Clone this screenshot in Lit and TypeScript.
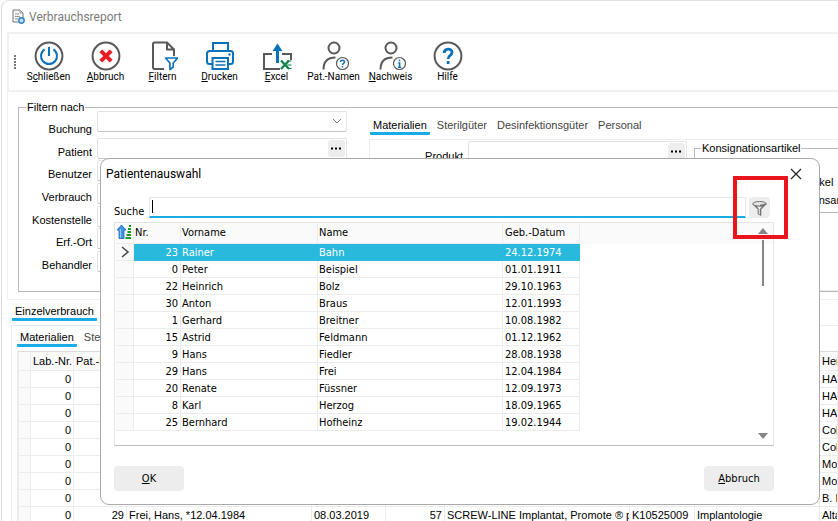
import { LitElement, html, css, svg } from "lit";
import { customElement } from "lit/decorators.js";
import { classMap } from "lit/directives/class-map.js";

const GREY = "#58595b";
const BLUE = "#0a72b9";

const icons = {
  power: svg`<circle cx="15" cy="15" r="13.4" fill="none" stroke=${GREY} stroke-width="2"/>
    <path d="M10.6 8.3a8 8 0 1 0 8.8 0M15 6v9" fill="none" stroke=${BLUE} stroke-width="2"/>`,
  cancel: svg`<circle cx="15" cy="15" r="13.4" fill="none" stroke=${GREY} stroke-width="2"/>
    <path d="M9.8 9.8l10.4 10.4M20.2 9.8L9.8 20.2" fill="none" stroke="#e81c24" stroke-width="4"/>`,
  filter: svg`<path d="M16 28H6.500A1.500 1.500 0 0 1 5 26.500V3A1.500 1.500 0 0 1 6.500 1.500H19l7 7V15M19 1.500v7h7" fill="none" stroke=${GREY} stroke-width="2"/>
    <path d="M17.500 17h12l-4.300 5v4l-3.300 2.500V22z" fill="#fff" stroke=${BLUE} stroke-width="1.600" stroke-linejoin="round"/>`,
  print: svg`<path d="M8 10V2h15v8M7 23H4.500A2.500 2.500 0 0 1 2 20.500v-8A2.500 2.500 0 0 1 4.500 10h21a2.500 2.500 0 0 1 2.500 2.500v8a2.500 2.500 0 0 1-2.500 2.500H23" fill="none" stroke=${BLUE} stroke-width="2"/>
    <path d="M7.500 17h15.500v11H7.500z" fill="#fff" stroke=${BLUE} stroke-width="2"/>
    <path d="M10.500 20.500h10M10.500 24h10" stroke=${BLUE} stroke-width="1.300"/><circle cx="24.500" cy="13.500" r="1.200" fill=${BLUE}/>`,
  excel: svg`<path d="M10 13H2v15h16M20 13h9v6" fill="none" stroke=${GREY} stroke-width="2"/>
    <path d="M15.500 22V8" stroke=${BLUE} stroke-width="3"/><path d="M10.500 10l5-7.500 5 7.500z" fill=${BLUE}/>
    <path d="M19 19.500l8 8.500M27 19.500L19 28" stroke="#12804a" stroke-width="2.300"/><path d="M25 20h4.500M25 24h4.500M26 27.500h3.500" stroke="#12804a" stroke-width="1.200"/>`,
  person: svg`<circle cx="15" cy="7" r="5.500" fill="none" stroke=${GREY} stroke-width="2"/>
    <path d="M4.500 28.500c0-7.500 4-12 12-12" fill="none" stroke=${GREY} stroke-width="2"/>
    <circle cx="23.500" cy="22.500" r="6" fill="#fff" stroke=${GREY} stroke-width="1.200"/>`,
  question: svg`<path d="M21.500 21c0-2.500 4-2.500 4 0 0 1.500-2 1.300-2 3M23.500 25.100v1.500" fill="none" stroke=${BLUE} stroke-width="1.500"/>`,
  info: svg`<path d="M23.500 18.500v1.800M22.300 22h1.300v4.200M22 26.200h3.200" fill="none" stroke=${BLUE} stroke-width="1.500"/>`,
  help: svg`<circle cx="15" cy="15" r="13.400" fill="none" stroke=${GREY} stroke-width="2"/>
    <path d="M11.200 12c0-5 7.800-5 7.800-.5 0 3-3.900 2.800-3.900 6.500M15.100 20v3" fill="none" stroke=${BLUE} stroke-width="2.800"/>`,
};

const tools = [
  { art: icons.power, text: html`S<u>c</u>hließen` },
  { art: icons.cancel, text: html`<u>A</u>bbruch` },
  { art: icons.filter, text: html`<u>F</u>iltern` },
  { art: icons.print, text: html`<u>D</u>rucken` },
  { art: icons.excel, text: html`<u>E</u>xcel` },
  { art: [icons.person, icons.question], text: html`Pat.-Namen` },
  { art: [icons.person, icons.info], text: html`<u>N</u>achweis` },
  { art: icons.help, text: html`Hilfe` },
];

const patients: [number, string, string, string][] = [
  [23, "Rainer", "Bahn", "24.12.1974"],
  [0, "Peter", "Beispiel", "01.01.1911"],
  [22, "Heinrich", "Bolz", "29.10.1963"],
  [30, "Anton", "Braus", "12.01.1993"],
  [1, "Gerhard", "Breitner", "10.08.1982"],
  [15, "Astrid", "Feldmann", "01.12.1962"],
  [9, "Hans", "Fiedler", "28.08.1938"],
  [29, "Hans", "Frei", "12.04.1984"],
  [20, "Renate", "Füssner", "12.09.1973"],
  [8, "Karl", "Herzog", "18.09.1965"],
  [25, "Bernhard", "Hofheinz", "19.02.1944"],
];

const filterNames = ["Buchung", "Patient", "Benutzer", "Verbrauch", "Kostenstelle", "Erf.-Ort", "Behandler"];
const makers = ["HAGER", "HAGER", "HAGER", "Coltene", "Coltene", "Morita", "Morita", "B. Braun"];

@customElement("patient-dialog")
export class PatientDialog extends LitElement {
  static styles = css`
    :host {
      display: block;
      box-sizing: border-box;
      padding: 0 45px 13px 13px;
      background: #fff;
      border: 1px solid #a9a9a9;
      border-radius: 9px;
      font: 11px/16px "DejaVu Sans Condensed", "DejaVu Sans", sans-serif;
      color: #000;
    }
    .head { display: flex; justify-content: space-between; align-items: center; height: 30px; margin: 0 -28px 0 -8px; }
    h2 { margin: 0; font: 12px/16px Roboto, sans-serif; }
    button { border: 0; padding: 0; font: inherit; color: inherit; background: #ededed; border-radius: 4px; }
    .close { background: none; width: 12px; height: 12px; display: flex; }
    .search { display: flex; align-items: flex-end; margin: 8px 4px 4px 0; height: 21px; }
    .search label { width: 35px; line-height: 12px; }
    .box { position: relative; flex: 1; display: flex; }
    .box input {
      flex: 1; min-width: 0; height: 21px; box-sizing: border-box; padding: 0 4px; outline: none;
      border: 1px solid #e6e6e6; border-bottom: 2px solid #1aace4; border-radius: 1px; font: inherit;
    }
    .caret { position: absolute; left: 3px; top: 3px; width: 1px; height: 13px; background: #000; }
    .funnel { width: 21px; height: 21px; margin-left: 3px; display: flex; align-items: center; justify-content: center; }
    .grid { display: flex; justify-content: space-between; border: 1px solid #e3e3e3; border-bottom: 1px solid #bdbdbd; height: 222px; padding-left: 1px; }
    table { border-collapse: separate; border-spacing: 0; table-layout: fixed; width: 464px; align-self: flex-start; }
    th { font-weight: 400; text-align: left; background: #fafafa; height: 21px; }
    th, td { padding: 0 2px 0 1px; border-right: 1px solid #ececec; border-bottom: 1px solid #ececec; box-sizing: border-box; white-space: nowrap; overflow: hidden; }
    td { height: 17px; line-height: 14px; padding-top: 2px; }
    .date { padding-left: 2px; }
    .mark { background: #fafafa; padding: 0; }
    .mark svg { display: block; }
    .num { text-align: right; }
    .selected td:not(.mark) { background: #29b9dd; color: #fff; border-color: #29b9dd; }
    .headfill { flex: 1; height: 21px; background: #fafafa; }
    .bar { display: flex; flex-direction: column; align-items: center; width: 21px; padding: 5px 0 6px; box-sizing: border-box; background: linear-gradient(#fafafa 21px, #fff 21px); }
    .thumb { width: 2px; height: 46px; margin-top: 6px; background: #858585; }
    .up, .down { border: 5px solid transparent; }
    .up { border-top: 0; border-bottom: 6px solid #858585; }
    .down { border-bottom: 0; border-top: 6px solid #858585; margin-top: auto; }
    .foot { display: flex; justify-content: space-between; margin-top: 20px; }
    .foot button { width: 70px; height: 25px; }
    .c0 { width: 18px; } .c1 { width: 47px; } .c2 { width: 137px; } .c3 { width: 185px; } .c4 { width: 77px; }
  `;

  render() {
    return html`
      <div class="head">
        <h2>Patientenauswahl</h2>
        <button class="close" aria-label="Schließen">
          <svg width="12" height="12"><path d="M1 1l10 10M11 1L1 11" stroke="#222" stroke-width="1.200" /></svg>
        </button>
      </div>
      <div class="search">
        <label for="q">Suche</label>
        <div class="box"><input id="q" type="text" /><span class="caret"></span></div>
        <button class="funnel" aria-label="Filter">
          <svg width="15" height="16" viewBox="0 0 15 16">
            <path d="M.8 4.200L6 9.500v4.500l3 1.500v-6l5.200-5.500z" fill="#7d7d7d" stroke="#6a6a6a" stroke-width=".6" />
            <path d="M6.800 9v4.800l1 .6V9L10 6.300H5z" fill="#f0f0f0" />
            <ellipse cx="7.500" cy="3.800" rx="6.700" ry="2.300" fill="#e4e4e4" stroke="#666" stroke-width=".9" />
            <path d="M8 5.200c3 0 5-.6 5.200-1.700" fill="none" stroke="#444" />
          </svg>
        </button>
      </div>
      <div class="grid">
        <table>
          <colgroup><col class="c0" /><col class="c1" /><col class="c2" /><col class="c3" /><col class="c4" /></colgroup>
          <thead>
            <tr>
              <th class="mark" aria-label="Sortierung">
                <svg width="17" height="18" viewBox="0 0 17 18">
                  <path d="M5.500 1L10 6H8v8.500H3V6H1z" fill="#3d94e6" stroke="#1c62b4" stroke-width=".8" />
                  <path d="M4.500 5v8.500" stroke="#8cc8fa" stroke-width="1.200" />
                  <path d="M13 2h2M12 5h3M11.500 8h3.500M10.500 11h4.500M9.500 14h5.500" stroke="#189a25" stroke-width="2" />
                </svg>
              </th>
              <th>Nr.</th><th>Vorname</th><th>Name</th><th class="date">Geb.-Datum</th>
            </tr>
          </thead>
          <tbody>
            ${patients.map(([nr, first, last, born], i) => html`
              <tr class=${classMap({ selected: i === 0 })}>
                <td class="mark">${i === 0 ? html`<svg width="17" height="16"><path d="M6 3l6 5-6 5" fill="none" stroke="#444" stroke-width="1.500" /></svg>` : ""}</td>
                <td class="num">${nr}</td><td>${first}</td><td>${last}</td><td class="date">${born}</td>
              </tr>`)}
          </tbody>
        </table>
        <div class="headfill"></div>
        <div class="bar"><span class="up"></span><span class="thumb"></span><span class="down"></span></div>
      </div>
      <div class="foot">
        <button><span><u>O</u>K</span></button>
        <button><span><u>A</u>bbruch</span></button>
      </div>
    `;
  }
}

@customElement("app-root")
export class AppRoot extends LitElement {
  static styles = css`
    :host { display: block; position: relative; height: 100vh; overflow: hidden; background: #fff; color: #000; font: 11px/14px "Liberation Sans", Arial, sans-serif; }
    .window { margin-left: 1px; padding-left: 5px; border-left: 1px solid #dcdcdc; border-top: 1px solid #e4e4e4; border-top-left-radius: 8px; }
    .title { display: flex; align-items: center; gap: 4px; height: 31px; padding-left: 5px; font: 12px/16px Roboto, sans-serif; color: #7b7b7b; }
    h1 { margin: 0; font: inherit; }
    .tools { display: flex; align-items: center; height: 56px; border: 2px solid #f0f0f0; border-right: 0; padding-left: 5px; }
    .grip { width: 2px; height: 14px; background: repeating-linear-gradient(#777 0 2px, #fff 2px 3px); margin-right: 4px; }
    .tool { display: flex; flex-direction: column; align-items: center; width: 57px; padding: 0; border: 0; background: none; font: 10px/12px Roboto, sans-serif; color: #000; white-space: nowrap; }
    .panel { border: 1px solid #f0f0f0; border-top: 0; border-right: 0; padding: 8px 0 7px 10px; }
    fieldset { margin: 0; min-width: 0; border: 1px solid #b9b9b9; border-right: 0; padding: 0; }
    legend { padding: 0 1px; margin-left: 7px; line-height: 14px; }
    .filters { display: flex; gap: 22px; height: 177px; }
    .fields { display: flex; gap: 5px; width: 328px; height: 161px; margin-top: -3px; flex: none; }
    .names { display: flex; flex-direction: column; justify-content: space-between; width: 73px; padding-top: 11px; text-align: right; white-space: nowrap; }
    .row { display: flex; align-items: flex-end; gap: 5px; height: 21px; }
    .row label { text-align: right; line-height: 12px; white-space: nowrap; }
    .values { flex: 1; display: flex; flex-direction: column; gap: 6px; }
    .rest { display: flex; flex-direction: column; justify-content: space-between; flex: 1; margin-top: -5px; }
    .ctl { position: relative; flex: 1; display: flex; }
    .rest .ctl, .values > .ctl { flex: none; }
    .ctl input, .ctl select { flex: 1; min-width: 0; height: 21px; box-sizing: border-box; margin: 0; border: 1px solid #e2e2e2; border-bottom-color: #c4c4c4; border-radius: 2px; background: #fff; appearance: none; font: inherit; }
    .chev { position: absolute; right: 5px; top: 7px; pointer-events: none; }
    .dots { position: absolute; right: 2px; top: 2px; width: 17px; height: 17px; border: 0; border-radius: 3px; padding: 0; background: #ededed; display: flex; align-items: center; justify-content: center; }
    .right { flex: 1; min-width: 0; display: flex; flex-direction: column; padding-top: 4px; }
    .right .tabs { padding-left: 1px; }
    .tabs { display: flex; color: #444; }
    .tab { border: 0; border-bottom: 3px solid transparent; padding: 0 3px; margin-right: 4px; background: none; font: inherit; color: inherit; height: 17px; line-height: 14px; white-space: nowrap; }
    .on { color: #000; border-color: #1aace4; border-radius: 1px; }
    .sheet { flex: 1; display: flex; gap: 7px; margin-top: 4px; border: 1px solid #ececec; border-right: 0; padding-top: 1px; }
    .product { width: 317px; flex: none; }
    .product label { width: 93px; }
    .consign { flex: 1; height: 70px; }
    .consign legend { margin-left: 6px; }
    .choice { display: flex; align-items: center; gap: 4px; height: 18px; padding-left: 8px; white-space: nowrap; }
    .choice input { margin: 0; width: 12px; height: 12px; accent-color: #1aace4; }
    .choices { overflow: hidden; }
    .outer { padding: 4px 0 0 5px; }
    .inner { margin: 4px 0 0 -1px; border: 1px solid #ececec; border-right: 0; padding: 4px 0 0 5px; }
    table { margin-top: 4px; border-collapse: separate; border-spacing: 0; table-layout: fixed; width: 100%; border-left: 2px solid #ececec; border-top: 1px solid #dcdcdc; }
    th, td { padding: 0 2px; box-sizing: border-box; border-right: 1px solid #ececec; border-bottom: 1px solid #ececec; white-space: nowrap; overflow: hidden; font-weight: 400; text-align: left; }
    th { height: 19px; background: #fafafa; }
    td { height: 17px; line-height: 16px; }
    td:first-child { background: #fafafa; }
    .num { text-align: right; }
    .w0 { width: 12px; } .w1 { width: 43px; } .w2 { width: 53px; } .w3 { width: 185px; } .w4 { width: 74px; }
    .w5 { width: 59px; } .w6 { width: 185px; } .w7 { width: 65px; } .w8 { width: 125px; }
    .dialog { position: absolute; left: 100px; right: 18px; top: 158px; }
    .marker { position: absolute; right: 50px; top: 176px; width: 55px; height: 63px; box-sizing: border-box; border: 4px solid #e8151c; pointer-events: none; }
  `;

  private dots(label: string) {
    return html`<button class="dots" aria-label=${label}>
      <svg width="11" height="3"><path d="M0 .5h2v2H0zM4 .5h2v2H4zM8 .5h2v2H8z" fill="#000" /></svg>
    </button>`;
  }

  render() {
    return html`
      <div class="window">
        <div class="title">
          <svg width="13" height="15" viewBox="0 0 13 15">
            <path d="M1 1h7l3 3v9H1z" fill="#f6f6f6" stroke="#777" /><path d="M8 1v3h3M3 5h4M3 7.500h5M3 10h3" fill="none" stroke="#999" />
            <circle cx="9.500" cy="11.500" r="2.700" fill="#b7dcf5" stroke="#3584be" stroke-width="1.400" />
          </svg>
          <h1>Verbrauchsreport</h1>
        </div>
        <div class="tools">
          <span class="grip"></span>
          ${tools.map((t) => html`<button class="tool"><svg width="30" height="30" viewBox="0 0 30 30">${t.art}</svg><span>${t.text}</span></button>`)}
        </div>
        <div class="panel">
          <fieldset>
            <legend>Filtern nach</legend>
            <div class="filters">
              <div class="fields">
                <div class="names">${filterNames.map((name) => html`<label for=${name}>${name}</label>`)}</div>
                <div class="values">
                  <div class="ctl"><select id="Buchung"><option></option></select>
                    <svg class="chev" width="10" height="7"><path d="M1 1l4 4 4-4" fill="none" stroke="#888" /></svg></div>
                  <div class="ctl"><input id="Patient" type="text" />${this.dots("Patient wählen")}</div>
                  <div class="rest">
                    ${filterNames.slice(2).map((name) => html`<div class="ctl"><input id=${name} type="text" /></div>`)}
                  </div>
                </div>
              </div>
              <div class="right">
                <div class="tabs">
                  <button class="tab on">Materialien</button><button class="tab">Sterilgüter</button><button class="tab">Desinfektionsgüter</button><button class="tab">Personal</button>
                </div>
                <div class="sheet">
                  <div class="row product">
                    <label for="prod">Produkt</label>
                    <div class="ctl"><input id="prod" type="text" />${this.dots("Produkt wählen")}</div>
                  </div>
                  <fieldset class="consign">
                    <legend>Konsignationsartikel</legend>
                    <div class="choices">
                      <label class="choice"><input type="radio" name="k" checked />Alle</label>
                      <label class="choice"><input type="radio" name="k" />für Konsignationsartikel</label>
                      <label class="choice"><input type="radio" name="k" />nicht für Konsignationsartikel</label>
                    </div>
                  </fieldset>
                </div>
              </div>
            </div>
          </fieldset>
        </div>
        <div class="outer">
          <div class="tabs"><button class="tab on">Einzelverbrauch</button></div>
          <div class="inner">
            <div class="tabs"><button class="tab on">Materialien</button><button class="tab">Sterilgüter</button></div>
            <table>
              <colgroup>${[0, 1, 2, 3, 4, 5, 6, 7, 8].map((n) => html`<col class="w${n}" />`)}<col /></colgroup>
              <thead>
                <tr><th></th><th>Lab.-Nr.</th><th>Pat.-Nr.</th><th></th><th></th><th></th><th></th><th></th><th></th><th>Hersteller</th></tr>
              </thead>
              <tbody>
                ${makers.map((m) => html`<tr><td></td><td class="num">0</td><td></td><td></td><td></td><td></td><td></td><td></td><td></td><td>${m}</td></tr>`)}
                <tr>
                  <td></td><td class="num">0</td><td class="num">29</td><td>Frei, Hans, *12.04.1984</td><td>08.03.2019</td><td class="num">57</td>
                  <td>SCREW-LINE Implantat, Promote ® plus</td><td>K10525009</td><td>Implantologie</td><td>Altatec</td>
                </tr>
              </tbody>
            </table>
          </div>
        </div>
      </div>
      <patient-dialog class="dialog" role="dialog" aria-label="Patientenauswahl"></patient-dialog>
      <div class="marker"></div>
    `;
  }
}
